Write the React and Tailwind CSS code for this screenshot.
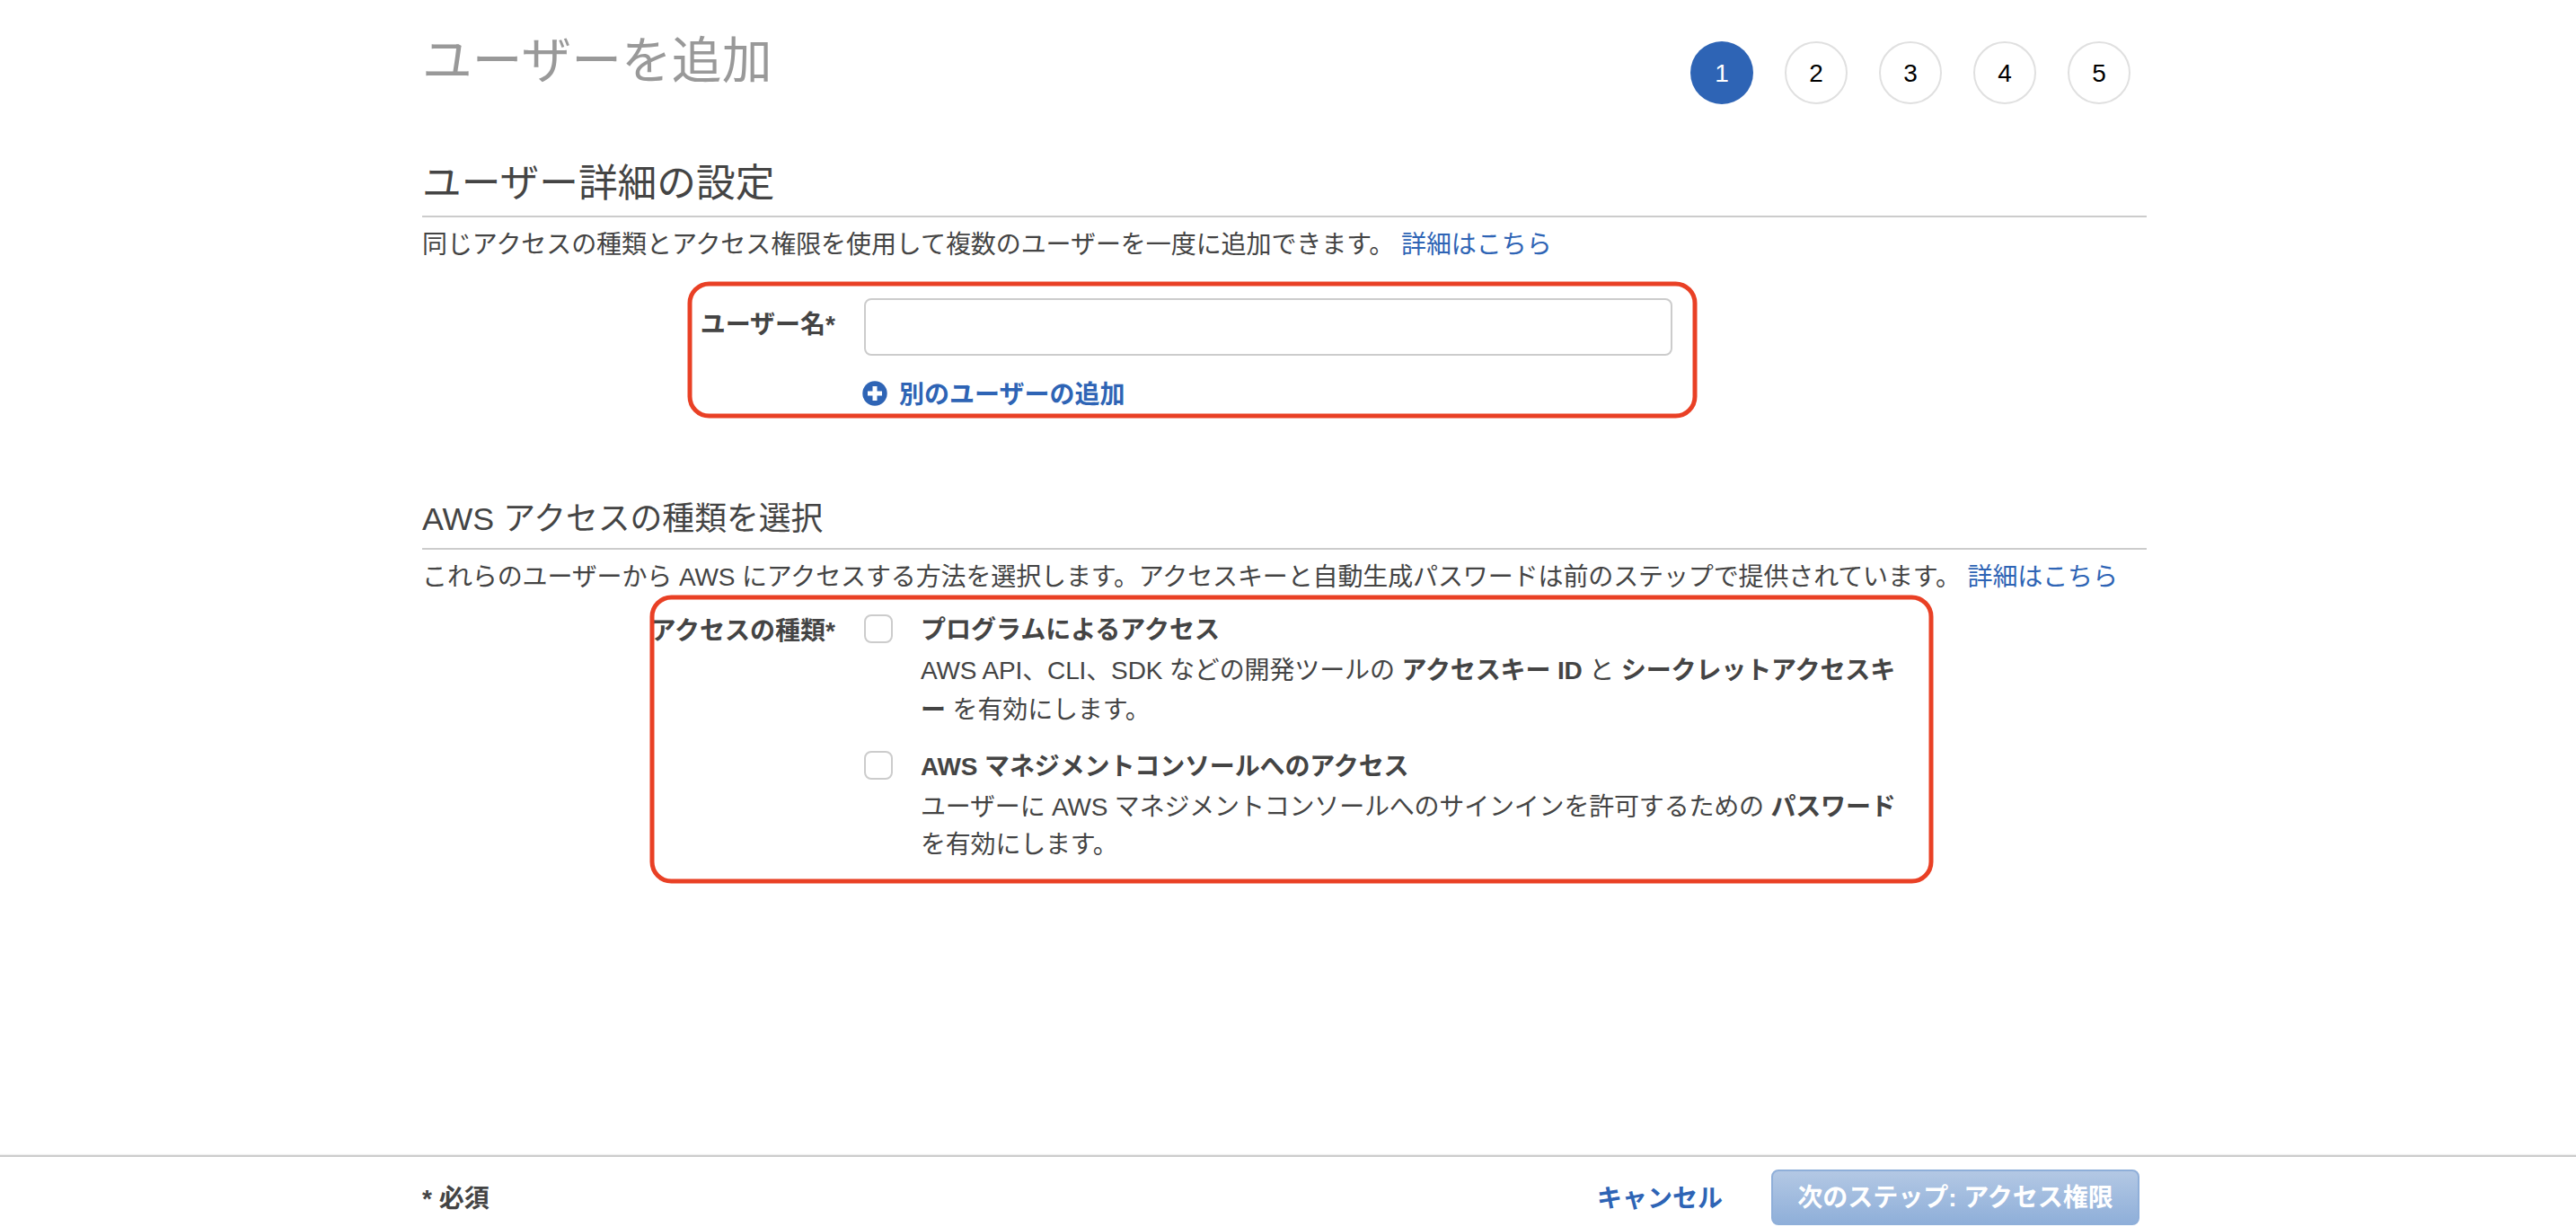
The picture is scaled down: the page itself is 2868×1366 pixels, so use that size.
import { useState } from "react";

const steps = [1, 2, 3, 4, 5];

const accessTypes = [
  {
    id: "programmatic",
    title: "プログラムによるアクセス",
    titleClass: "font-bold h-[43px]",
    textClass: "leading-[44px] tracking-[-0.13px]",
    description: (
      <>
        AWS API、CLI、SDK などの開発ツールの <b>アクセスキー ID</b> と <b>シークレットアクセスキ</b>
        <br />
        <b>ー</b> を有効にします。
      </>
    ),
  },
  {
    id: "console",
    title: "AWS マネジメントコンソールへのアクセス",
    titleClass: "font-bold h-[44px] tracking-[-0.13px]",
    textClass: "leading-[42px] tracking-[-0.19px]",
    description: (
      <>
        ユーザーに AWS マネジメントコンソールへのサインインを許可するための <b>パスワード</b>
        <br />
        を有効にします。
      </>
    ),
  },
];

const StepIndicator = ({ current }) => (
  <ol className="flex gap-[35px] mr-[18px] mt-[46px]">
    {steps.map((step) => (
      <li
        key={step}
        className={
          step === current
            ? "w-[70px] h-[70px] pt-0.5 rounded-full flex items-center justify-center bg-[#2e64b5] text-white"
            : "w-[70px] h-[70px] pt-0.5 rounded-full flex items-center justify-center border-2 border-[#e0e0e0] text-black"
        }
      >
        {step}
      </li>
    ))}
  </ol>
);

const PlusCircle = () => (
  <svg className="w-7 h-7" viewBox="0 0 28 28">
    <circle cx="14" cy="14" r="13.7" fill="#2e64b5" />
    <path d="M14 6v16M6 14h16" stroke="#fff" strokeWidth="5" />
  </svg>
);

const MoreLink = () => (
  <a href="#" className="text-[#2e64b5]">
    詳細はこちら
  </a>
);

// red rounded frame drawn over a form group
const Highlight = ({ className, width, height }) => (
  <svg className={className} width={width + 6} height={height + 6}>
    <rect x="3" y="3" width={width} height={height} rx="21.5" fill="none" stroke="#e94025" strokeWidth="5" />
  </svg>
);

const App = () => {
  const [userName, setUserName] = useState("");
  const [selected, setSelected] = useState({});

  const toggle = (id) => {
    setSelected((prev) => ({ ...prev, [id]: !prev[id] }));
  };

  return (
    <div className="h-screen flex flex-col overflow-hidden bg-white text-[#444] text-[28px] leading-10 font-['Liberation_Sans','Noto_Sans_CJK_JP',sans-serif]">
      <main className="flex-1 w-[1920px] ml-[470px]">
        <header className="flex justify-between h-[164px]">
          <h1 className="text-[55.8px] leading-[60px] text-[#999] pt-[38px]">ユーザーを追加</h1>
          <StepIndicator current={1} />
        </header>

        <section className="h-[370px]">
          <h2 className="text-[43.7px] leading-[60px] h-[78px] pt-[10px] border-b-2 border-[#ccc]">
            ユーザー詳細の設定
          </h2>
          <p className="h-[50px] pt-[11px] tracking-[-0.07px]">
            同じアクセスの種類とアクセス権限を使用して複数のユーザーを一度に追加できます。 <MoreLink />
          </p>
          <div className="relative flex mt-10">
            <label htmlFor="user-name" className="w-[460px] text-right font-bold pt-[10px]">
              ユーザー名*
            </label>
            <div className="ml-8">
              <input
                id="user-name"
                className="block w-[900px] h-16 px-4 border-2 border-[#ccc] rounded-lg outline-none"
                value={userName}
                onChange={(e) => setUserName(e.target.value)}
              />
              <button className="flex items-center gap-[13px] mt-[22px] -ml-0.5 font-bold text-[#2e64b5]">
                <PlusCircle />
                <span className="pt-0.5 -mb-0.5">別のユーザーの追加</span>
              </button>
            </div>
            <Highlight className="absolute left-[295px] -top-[19px] pointer-events-none" width={1119} height={147} />
          </div>
        </section>

        <section>
          <h3 className="text-[35.8px] leading-[50px] h-[78px] pt-[19px] border-b-2 border-[#ccc]">
            AWS アクセスの種類を選択
          </h3>
          <p className="h-[50px] pt-[11px] tracking-[-0.12px]">
            これらのユーザーから AWS にアクセスする方法を選択します。アクセスキーと自動生成パスワードは前のステップで提供されています。{" "}
            <MoreLink />
          </p>
          <div className="relative flex pt-[18px]">
            <div className="w-[460px] text-right font-bold pt-[3px]">アクセスの種類*</div>
            <div className="ml-8 flex flex-col">
              {accessTypes.map(({ id, title, titleClass, textClass, description }) => (
                <label key={id} className="flex h-[152px]">
                  <input
                    type="checkbox"
                    className="appearance-none w-8 h-8 mt-1 border-2 border-[#ccc] rounded-lg checked:bg-[#2e64b5]"
                    checked={!!selected[id]}
                    onChange={() => toggle(id)}
                  />
                  <div className="ml-[31px] pt-0.5 whitespace-nowrap">
                    <div className={titleClass}>{title}</div>
                    <div className={textClass}>{description}</div>
                  </div>
                </label>
              ))}
            </div>
            <Highlight className="absolute left-[253px] top-0 pointer-events-none" width={1424} height={316} />
          </div>
        </section>
      </main>

      <footer className="h-20 shrink-0 border-t-2 border-[#ccc] shadow-[0_-1px_1px_#eee] pl-[470px] pr-[486px] flex justify-between font-bold">
        <div className="pt-[27px]">* 必須</div>
        <div className="flex items-start">
          <button className="text-[#2e64b5] mt-[27px] mr-[54px]">キャンセル</button>
          <button className="w-[410px] h-[62px] mt-[14px] pt-0.5 rounded-lg border-2 border-[#8fafd9] bg-linear-to-b from-[#b3c8e4] to-[#8fafd9] text-white">
            次のステップ: アクセス権限
          </button>
        </div>
      </footer>
    </div>
  );
};

export default App;
